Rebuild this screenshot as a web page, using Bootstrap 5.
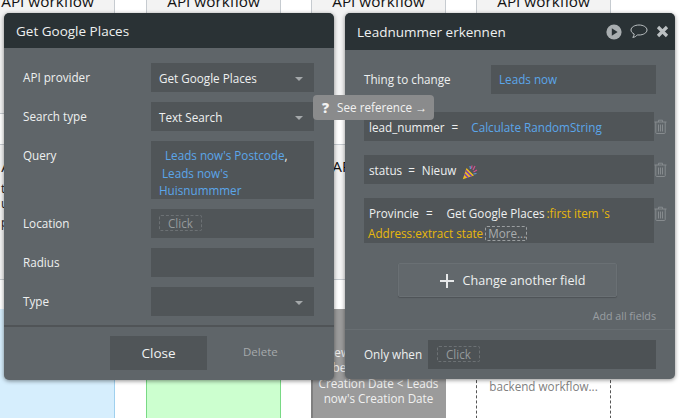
<!DOCTYPE html>
<html lang="nl">
<head>
<meta charset="utf-8">
<title>Leadnummer erkennen</title>
<link href="https://cdn.jsdelivr.net/npm/bootstrap@5.3.0/dist/css/bootstrap.min.css" rel="stylesheet">
<style>
html,body{margin:0;width:690px;height:418px;overflow:hidden;background:#fff;}
body{font-family:"Open Sans","Noto Sans",sans-serif;font-size:11.7px;line-height:18px;color:#eef0f0;}
.canvas{position:relative;width:690px;height:418px;overflow:hidden;}
.wf{position:absolute;width:135px;color:#111;text-align:center;font-size:15.3px;line-height:22px;}
.wf-cell{background:#f3f3f3;border:1px solid #c6cbd0;}
.c1{left:-20px;}
.c2{left:146px;}
.c3{left:311px;}
.c4{left:476px;}
.r1{top:-20px;height:134px;padding-top:9px;}
.r2{top:144px;height:136px;padding-top:10px;}
.r3{top:309px;height:130px;}
.sliver{text-align:left;padding-left:20px;font-size:11.7px;line-height:15px;color:#222;}
.sliver-a{font-size:15.3px;line-height:22px;text-align:center;margin-left:-20px;}
.blue-n{background:#d6eefd;border-right:1px solid #9fd0ee;}
.green-n{background:#ccffcf;border-left:1px solid #79d985;border-right:1px solid #79d985;}
.grey-n{background:#9b9b9b;border-left:2px solid #7f7f7f;padding-right:2px;color:#f1f1f1;font-size:11.7px;line-height:15.3px;padding-top:36px;}
.dash-n{border-left:1px dashed #555;border-right:1px dashed #555;color:#808080;font-size:11.7px;line-height:18px;padding-top:68px;}
.win{position:absolute;background:#5f6569;border:0;border-radius:5px;box-shadow:0 1px 4px rgba(0,0,0,.45);color:#eef0f0;overflow:hidden;}
.win-l{left:4px;top:13px;width:330px;height:367px;}
.win-r{left:345px;top:13px;width:330px;height:366px;}
.win-h{background:#2a3235;color:#eef0f0;font-size:13.5px;line-height:20px;border:0;border-radius:0;padding:0 12px;height:35px;}
.win-r .win-h{height:37px;padding-right:6px;}
.bodyl{padding:15px 20px 0 19px;height:277px;gap:10px;}
.flabel{width:128px;flex:none;padding-top:5px;}
.fbox{background:#505558;height:29px;padding:6px 8px 0;position:relative;flex:1;color:#eef0f0;}
.fbox-q{height:58px;padding:6px 8px 0;line-height:17.5px;}
.fbox-c{padding-top:7px;}
.caret{position:absolute;right:11px;top:14px;width:0;height:0;border-left:4px solid transparent;border-right:4px solid transparent;border-top:4px solid #a4a8aa;}
.blu{color:#5ba6ea;}
.gold{color:#e8b80c;}
.i1{margin-left:6px;}
.i2{margin-left:3px;}
.dashed{display:inline-block;border:1px dashed #6c7174;border-radius:2px;color:#959a9c;line-height:14px;padding:0 8px;margin-top:-1px;vertical-align:top;}
.foot{border-top:2px solid #505457;height:55px;padding-top:9px;padding-left:106px;}
.btn-close-w{width:97px;height:34px;background:#505558;color:#f0f2f2;font-size:13.5px;line-height:20px;border:0;border-radius:0;padding:6px 0;}
.btn-close-w:hover{background:#505558;color:#f0f2f2;}
.del{margin-left:36px;margin-top:7px;color:#a6aaac;font-size:11.5px;}
.ico{gap:8px;}
.bodyr{padding:15px 19px 0;height:279px;}
.thing{width:292px;}
.thing .flabel{width:127px;padding-top:5px;}
.thing .fbox{padding-top:5px;}
.fx{width:290px;flex:none;background:#505558;padding:6px 5px 0;height:29px;white-space:nowrap;}
.fx-2{height:45px;padding:5px 4px 0 5px;line-height:20px;white-space:normal;}
.gapf{margin-top:18px;}
.gaps{margin-top:14px;}
.trash{margin-top:7px;flex:none;}
.trash-t{margin-top:8px;}
.g2{margin-left:2px;}
.g6{margin-left:6px;}
.g7{margin-left:7px;}
.g13{margin-left:13px;}
.g14{margin-left:14px;}
.addr{margin-left:-1px;}
.pop{vertical-align:-5px;margin-left:6px;}
.morebox{display:inline-block;border:1px dashed #9a9ea0;border-radius:2px;color:#a9adaf;line-height:13px;padding:0 0 0 2px;margin-left:2px;}
.addbtn{width:219px;height:34px;margin:20px 0 0 34px;background:#62686c;border:1px solid #6a7074;border-radius:2px;box-shadow:0 1px 1px rgba(0,0,0,.18);color:#eef0f0;font-size:12.6px;gap:9px;padding:2px 0 0 10px;}
.addbtn:hover{background:#62686c;color:#eef0f0;border-color:#6a7074;}
.addall{color:#999ea1;font-size:10.7px;text-align:right;margin:10px 0 0;}
.foot-r{border-top:1px solid #686e72;padding:10px 19px 0;height:50px;}
.only{width:64px;flex:none;padding-top:5px;}
.fbox-o{background:#4d5255;height:29px;padding:7px 9px 0;width:228px;flex:none;}
.seeref{position:absolute;left:313px;top:95px;width:121px;height:25px;background:#8a8b8c;border-radius:4px;color:#f2f2f2;line-height:25px;padding-left:9px;z-index:5;gap:8px;}
.qm{font-weight:800;font-size:14px;}
.arr{font-family:"Liberation Sans",sans-serif;font-size:12px;}
</style>
</head>
<body>
<div class="canvas">
  <div class="wf wf-cell c1 r1">API workflow</div>
  <div class="wf wf-cell c2 r1">API workflow</div>
  <div class="wf wf-cell c3 r1">API workflow</div>
  <div class="wf wf-cell c4 r1">API workflow</div>
  <div class="wf wf-cell c1 r2 sliver"><div class="sliver-a">API workflow</div><div class="mt-1">t</div><div>ur</div><div class="mt-1">p.</div></div>
  <div class="wf wf-cell c3 r2">API workflow</div>
  <div class="wf c1 r3 blue-n"></div>
  <div class="wf c2 r3 green-n"></div>
  <div class="wf c3 r3 grey-n">New Lead must not<br>before the Leads<br>Creation Date &lt; Leads<br>now's Creation Date</div>
  <div class="wf c4 r3 dash-n">backend workflow...</div>

  <div class="card win win-l">
    <div class="card-header win-h d-flex align-items-center">Get Google Places</div>
    <div class="bodyl d-flex flex-column">
      <div class="d-flex"><div class="flabel">API provider</div><div class="fbox">Get Google Places<span class="caret"></span></div></div>
      <div class="d-flex"><div class="flabel">Search type</div><div class="fbox">Text Search<span class="caret"></span></div></div>
      <div class="d-flex"><div class="flabel">Query</div><div class="fbox fbox-q"><span class="blu i1">Leads now's Postcode</span>,<br><span class="blu i2">Leads now's</span><br><span class="blu">Huisnummmer</span></div></div>
      <div class="d-flex"><div class="flabel">Location</div><div class="fbox fbox-c"><span class="dashed">Click</span></div></div>
      <div class="d-flex"><div class="flabel">Radius</div><div class="fbox"></div></div>
      <div class="d-flex"><div class="flabel">Type</div><div class="fbox"><span class="caret"></span></div></div>
    </div>
    <div class="foot d-flex align-items-start">
      <button type="button" class="btn btn-close-w">Close</button>
      <div class="del">Delete</div>
    </div>
  </div>

  <div class="card win win-r">
    <div class="card-header win-h d-flex align-items-center justify-content-between">
      <span>Leadnummer erkennen</span>
      <span class="ico d-flex align-items-center">
        <svg width="16" height="16" viewBox="0 0 16 16"><circle cx="8" cy="8" r="7.6" fill="#a9aeb0"/><path d="M5.800 4.300 11.600 8 5.800 11.700Z" fill="#2a3235"/></svg>
        <svg width="18" height="15" viewBox="0 0 18 15"><path d="M9 1C4.600 1 1 3.200 1 6c0 1.700 1.300 3.100 3.200 4-.1 1.300-.7 2.600-1.400 3.400 1.800-.2 3.400-1 4.500-2.500.6.100 1.100.100 1.700.100 4.400 0 8-2.200 8-5S13.400 1 9 1Z" fill="none" stroke="#bcc1c3" stroke-width="1"/></svg>
        <svg width="13" height="13" viewBox="0 0 13 13"><path d="M2 2 11 11M11 2 2 11" stroke="#bcc1c3" stroke-width="3.200"/></svg>
      </span>
    </div>
    <div class="bodyr">
      <div class="thing d-flex"><div class="flabel">Thing to change</div><div class="fbox"><span class="blu">Leads now</span></div></div>
      <div class="d-flex gapf">
        <div class="fx">lead_nummer<span class="g7">=</span><span class="blu g13">Calculate RandomString</span></div>
        <svg class="trash" width="13" height="15" viewBox="0 0 13 15" fill="none" stroke="#868b8e"><path d="M.5 3h12M4.500 3V1.200h4V3M1.800 3v10.800c0 .4.300.7.700.7h8c.4 0 .7-.3.700-.7V3M4.500 5.500v7M6.500 5.500v7M8.500 5.500v7"/></svg>
      </div>
      <div class="d-flex gaps">
        <div class="fx">status<span class="g6">=</span><span class="g7">Nieuw</span><svg class="pop" width="16" height="16" viewBox="0 0 16 16"><path d="M4.500 4 12 11.500 .8 15.300Z" fill="#ecbb1f"/><path d="M3.700 6.500 9.500 12.300M2.500 10 6.300 13.800" stroke="#7d3fb0" stroke-width="1.600"/><path d="M10 1.500 9.500 4.500M13 2 11 6M15 6 11.500 8" stroke="#d0508c" stroke-width="1.200"/><path d="M8 2 8.500 5M14.500 9.500 11.500 10" stroke="#5e9bd6" stroke-width="1.200"/></svg></div>
        <svg class="trash" width="13" height="15" viewBox="0 0 13 15" fill="none" stroke="#868b8e"><path d="M.5 3h12M4.500 3V1.200h4V3M1.800 3v10.800c0 .4.300.7.700.7h8c.4 0 .7-.3.700-.7V3M4.500 5.500v7M6.500 5.500v7M8.500 5.500v7"/></svg>
      </div>
      <div class="d-flex gaps">
        <div class="fx fx-2">Provincie<span class="g7">=</span><span class="g14">Get Google Places</span><span class="gold g2">:first item 's</span> <span class="gold addr">Address:extract state</span><span class="morebox">More...</span></div>
        <svg class="trash trash-t" width="13" height="15" viewBox="0 0 13 15" fill="none" stroke="#868b8e"><path d="M.5 3h12M4.500 3V1.200h4V3M1.800 3v10.800c0 .4.300.7.700.7h8c.4 0 .7-.3.700-.7V3M4.500 5.500v7M6.500 5.500v7M8.500 5.500v7"/></svg>
      </div>
      <button type="button" class="btn addbtn d-flex align-items-center justify-content-center">
        <svg width="14" height="14" viewBox="0 0 14 14"><path d="M7 0V14M0 7H14" stroke="#e6e8e9" stroke-width="2"/></svg>
        <span>Change another field</span>
      </button>
      <div class="addall">Add all fields</div>
    </div>
    <div class="foot-r d-flex">
      <div class="only">Only when</div>
      <div class="fbox-o"><span class="dashed">Click</span></div>
    </div>
  </div>

  <div class="seeref d-flex align-items-center"><span class="qm">?</span><span>See reference <span class="arr">→</span></span></div>
</div>
<script src="https://cdn.jsdelivr.net/npm/bootstrap@5.3.0/dist/js/bootstrap.bundle.min.js"></script>
</body>
</html>
